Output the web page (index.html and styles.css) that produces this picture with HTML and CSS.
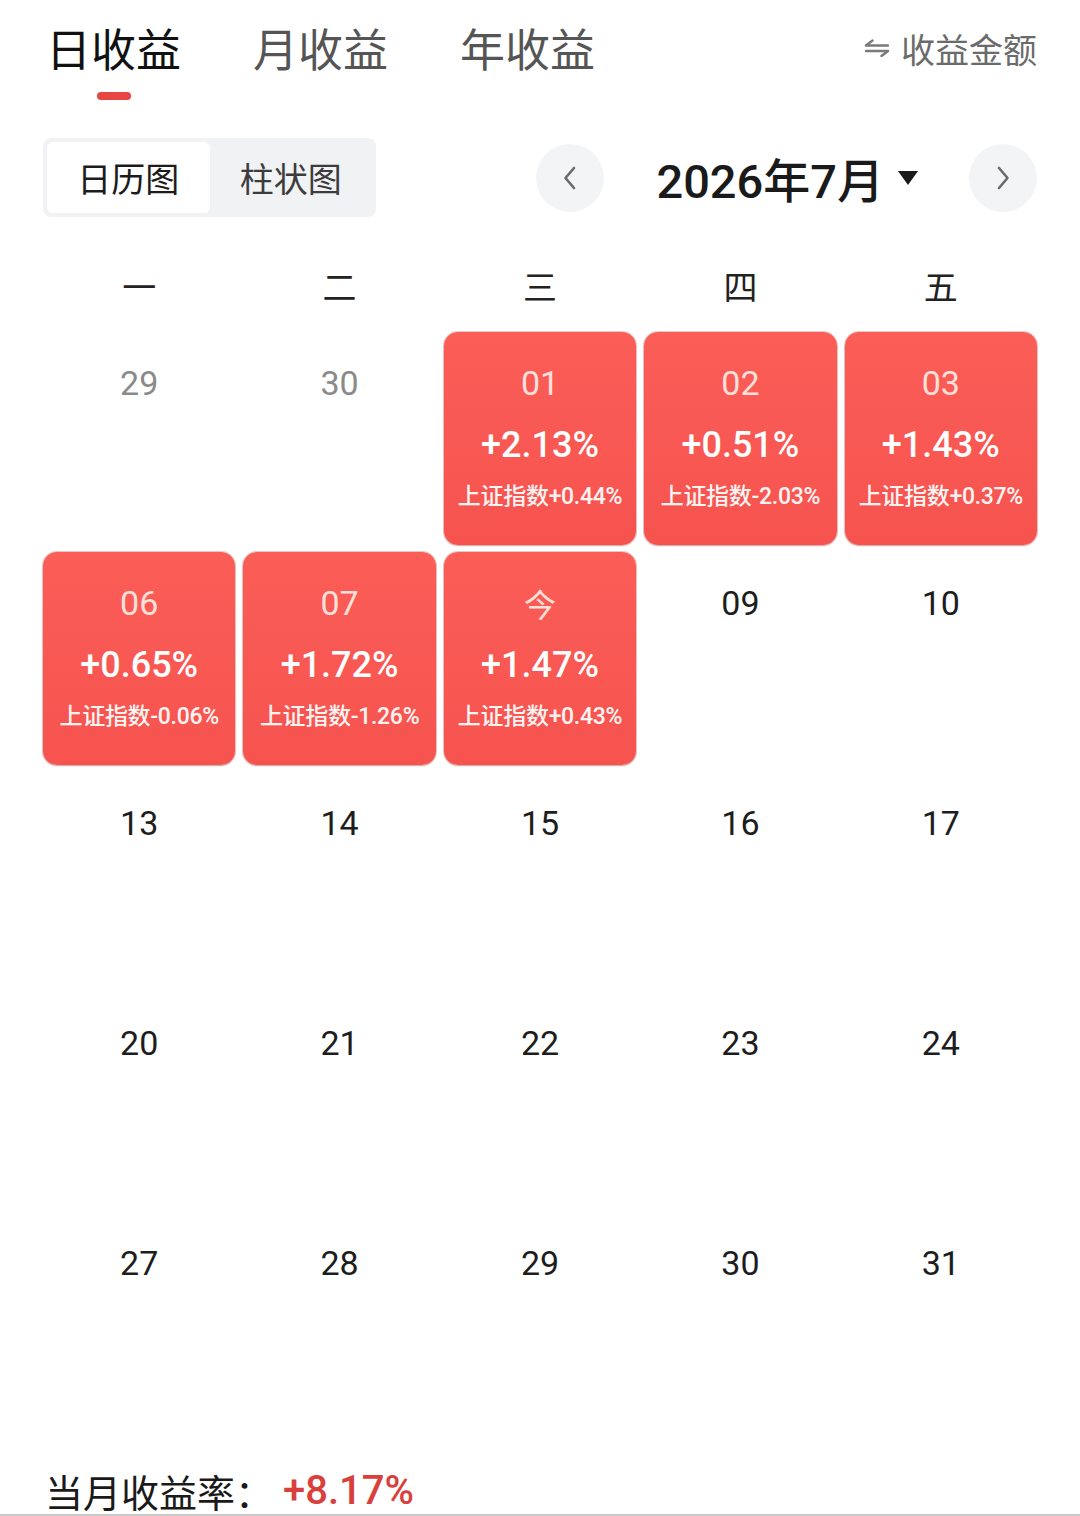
FILE: index.html
```html
<!DOCTYPE html>
<html lang="zh-CN">
<head>
<meta charset="utf-8">
<title>日收益</title>
<link rel="stylesheet" href="styles.css">
</head>
<body>
<div class="page">
  <header class="top">
    <nav class="tabs">
      <div class="tab active">日收益<span class="tab-bar"></span></div>
      <div class="tab">月收益</div>
      <div class="tab">年收益</div>
    </nav>
    <div class="switch">
      <svg class="switch-icon" width="28" height="18" viewBox="0 0 28 18">
        <path d="M3 6.5 H25 M3 6.5 L9.5 1.5" />
        <path d="M3 12 H25 M25 12 L18.5 17" />
      </svg>
      <span>收益金额</span>
    </div>
  </header>

  <div class="toolbar">
    <div class="segment">
      <div class="seg-item on">日历图</div>
      <div class="seg-item">柱状图</div>
    </div>
    <div class="month-nav">
      <div class="circle-btn">
        <svg width="16" height="26" viewBox="0 0 16 26"><path d="M12 3 L3.5 13 L12 23" /></svg>
      </div>
      <div class="month-title">2026年7月<span class="caret"></span></div>
      <div class="circle-btn">
        <svg width="16" height="26" viewBox="0 0 16 26"><path d="M4 3 L12.5 13 L4 23" /></svg>
      </div>
    </div>
  </div>

  <div class="weekdays">
    <div>一</div><div>二</div><div>三</div><div>四</div><div>五</div>
  </div>

  <div class="calendar">
    <div class="day other"><div class="num">29</div></div>
    <div class="day other"><div class="num">30</div></div>
    <div class="day up"><div class="num">01</div><div class="pct">+2.13%</div><div class="idx">上证指数+0.44%</div></div>
    <div class="day up"><div class="num">02</div><div class="pct">+0.51%</div><div class="idx">上证指数-2.03%</div></div>
    <div class="day up"><div class="num">03</div><div class="pct">+1.43%</div><div class="idx">上证指数+0.37%</div></div>

    <div class="day up"><div class="num">06</div><div class="pct">+0.65%</div><div class="idx">上证指数-0.06%</div></div>
    <div class="day up"><div class="num">07</div><div class="pct">+1.72%</div><div class="idx">上证指数-1.26%</div></div>
    <div class="day up"><div class="num cjk">今</div><div class="pct">+1.47%</div><div class="idx">上证指数+0.43%</div></div>
    <div class="day"><div class="num">09</div></div>
    <div class="day"><div class="num">10</div></div>

    <div class="day"><div class="num">13</div></div>
    <div class="day"><div class="num">14</div></div>
    <div class="day"><div class="num">15</div></div>
    <div class="day"><div class="num">16</div></div>
    <div class="day"><div class="num">17</div></div>

    <div class="day"><div class="num">20</div></div>
    <div class="day"><div class="num">21</div></div>
    <div class="day"><div class="num">22</div></div>
    <div class="day"><div class="num">23</div></div>
    <div class="day"><div class="num">24</div></div>

    <div class="day"><div class="num">27</div></div>
    <div class="day"><div class="num">28</div></div>
    <div class="day"><div class="num">29</div></div>
    <div class="day"><div class="num">30</div></div>
    <div class="day"><div class="num">31</div></div>
  </div>

  <div class="summary">
    <span class="summary-label">当月收益率：</span><span class="summary-value">+8.17%</span>
  </div>
</div>
</body>
</html>
```

FILE: styles.css
```css
html, body {
  margin: 0;
  padding: 0;
  background: #ffffff;
}

body {
  width: 1080px;
  height: 1516px;
  overflow: hidden;
  font-family: "Noto Sans CJK SC", "Noto Sans", sans-serif;
  color: #1a1a1a;
}

.page {
  padding: 0 43px;
  box-sizing: border-box;
  height: 1516px;
  border-bottom: 2px solid #c9c9c9;
}

/* ---------- top tabs ---------- */
.top {
  display: flex;
  justify-content: space-between;
  align-items: flex-start;
  height: 100px;
  padding-top: 22px;
  box-sizing: border-box;
}

.tabs {
  display: flex;
  gap: 72px;
  padding-left: 3px;
}

.tab {
  position: relative;
  font-size: 45px;
  line-height: 52px;
  color: #555;
}

.tab.active {
  color: #111;
}

.tab-bar {
  position: absolute;
  left: 50%;
  top: 70px;
  width: 34px;
  height: 8px;
  margin-left: -17px;
  border-radius: 4px;
  background: #e84643;
}

.switch {
  display: flex;
  align-items: center;
  gap: 10px;
  height: 52px;
  font-size: 34px;
  color: #6b6b6b;
}

.switch-icon path {
  fill: none;
  stroke: #7a7a7a;
  stroke-width: 2.4;
  stroke-linecap: round;
  stroke-linejoin: round;
}

/* ---------- toolbar ---------- */
.toolbar {
  display: flex;
  justify-content: space-between;
  align-items: center;
  margin-top: 38px;
  height: 79px;
}

.segment {
  display: flex;
  padding: 4px;
  width: 333px;
  height: 79px;
  box-sizing: border-box;
  border-radius: 8px;
  background: #f1f2f4;
}

.seg-item {
  width: 163px;
  display: flex;
  align-items: center;
  justify-content: center;
  font-size: 34px;
  color: #3c3c3c;
}

.seg-item.on {
  background: #ffffff;
  border-radius: 6px;
  color: #1c1c1c;
}

.month-nav {
  display: flex;
  align-items: center;
}

.circle-btn {
  width: 68px;
  height: 68px;
  border-radius: 50%;
  background: #f3f4f5;
  display: flex;
  align-items: center;
  justify-content: center;
}

.circle-btn path {
  fill: none;
  stroke: #6a6a6a;
  stroke-width: 2.6;
  stroke-linecap: round;
  stroke-linejoin: round;
}

.month-title {
  display: flex;
  align-items: center;
  margin: 0 51px 0 52px;
  font-family: "Roboto", "Noto Sans CJK SC", sans-serif;
  font-size: 47px;
  font-weight: 500;
  color: #1a1a1a;
}

.caret {
  margin-left: 14px;
  width: 0;
  height: 0;
  border-left: 10px solid transparent;
  border-right: 10px solid transparent;
  border-top: 14px solid #1a1a1a;
}

/* ---------- weekdays ---------- */
.weekdays {
  display: grid;
  grid-template-columns: repeat(5, 1fr);
  column-gap: 8px;
  margin-top: 38px;
  height: 60px;
  align-items: center;
  text-align: center;
  font-size: 34px;
  color: #222;
}

/* ---------- calendar grid ---------- */
.calendar {
  margin-top: 17px;
  display: grid;
  grid-template-columns: repeat(5, 1fr);
  grid-auto-rows: 213px;
  column-gap: 8px;
  row-gap: 7px;
}

.day {
  display: flex;
  flex-direction: column;
  align-items: center;
  padding-top: 31px;
  box-sizing: border-box;
  border-radius: 14px;
  font-family: "Roboto", "Noto Sans CJK SC", sans-serif;
}

.num {
  font-size: 34px;
  line-height: 40px;
  color: #1d1d1d;
}

.num.cjk {
  font-family: "Noto Sans CJK SC", sans-serif;
  font-size: 32px;
}

.day.other .num {
  color: #8a8a8a;
}

.day.up {
  background: linear-gradient(180deg, #fb5d57 0%, #f6534f 100%);
  box-shadow: 0 0 0 1px rgba(170, 70, 70, 0.28), 0 1px 2px rgba(120, 40, 40, 0.25);
}

.day.up .num {
  color: #fde0da;
}

.pct {
  margin-top: 20px;
  font-size: 36px;
  line-height: 44px;
  font-weight: 500;
  color: #ffffff;
}

.idx {
  margin-top: 16px;
  font-size: 23px;
  line-height: 28px;
  font-weight: 500;
  color: #fff4f2;
  white-space: nowrap;
  letter-spacing: -0.3px;
}

/* ---------- summary ---------- */
.summary {
  margin-top: 41px;
  display: flex;
  align-items: center;
  height: 48px;
  padding-left: 2px;
}

.summary-label {
  font-size: 38px;
  color: #1a1a1a;
}

.summary-value {
  margin-left: 10px;
  font-family: "Roboto", sans-serif;
  font-size: 40px;
  font-weight: 500;
  color: #d9403b;
}
```
